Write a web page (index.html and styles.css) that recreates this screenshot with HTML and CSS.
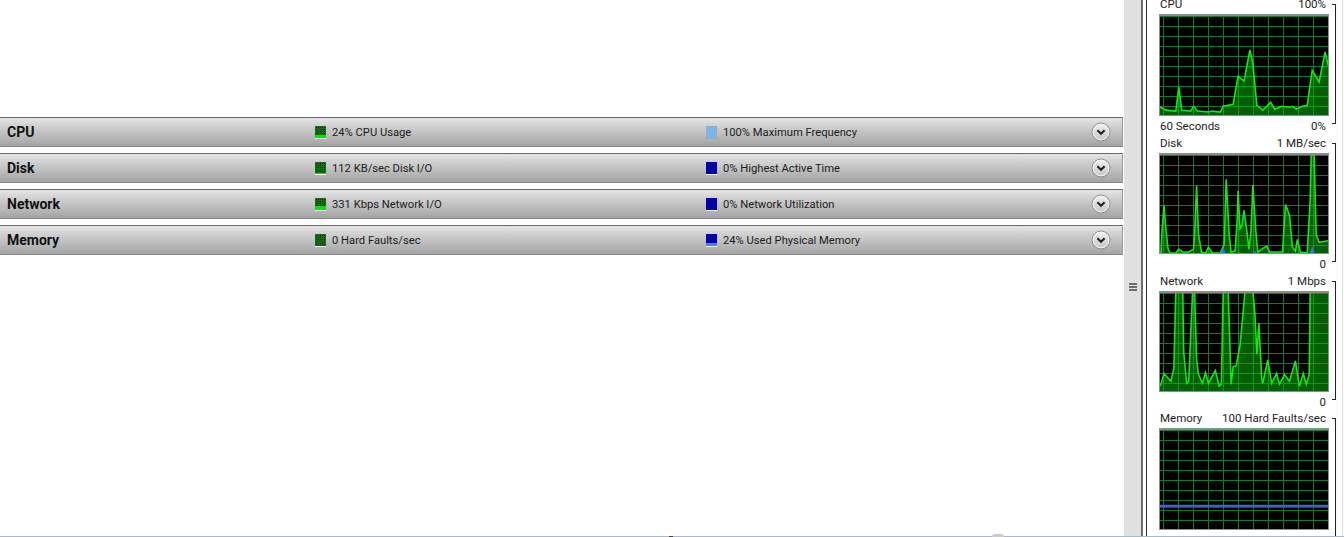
FILE: index.html
```html
<!DOCTYPE html>
<html lang="en">
<head>
  <meta charset="UTF-8" />
  <title>Resource Monitor - Overview</title>
  <link rel="stylesheet" href="styles.css">
</head>
<body>
  <div class="window">
    <!-- Resource bars -->
    <main class="overview">
      <div class="bar">
        <span class="bar-title">CPU</span>
        <span class="stat"><i class="swatch green"><b style="height:24%"></b></i>24% CPU Usage</span>
        <span class="stat"><i class="swatch sky"></i>100% Maximum Frequency</span>
        <svg class="chevron" viewBox="0 0 20 20"><use href="#expand" /></svg>
      </div>
      <div class="bar">
        <span class="bar-title">Disk</span>
        <span class="stat"><i class="swatch green"><b style="height:8%"></b></i>112 KB/sec Disk I/O</span>
        <span class="stat"><i class="swatch blue"></i>0% Highest Active Time</span>
        <svg class="chevron" viewBox="0 0 20 20"><use href="#expand" /></svg>
      </div>
      <div class="bar">
        <span class="bar-title">Network</span>
        <span class="stat"><i class="swatch green"><b style="height:33%"></b></i>331 Kbps Network I/O</span>
        <span class="stat"><i class="swatch blue"></i>0% Network Utilization</span>
        <svg class="chevron" viewBox="0 0 20 20"><use href="#expand" /></svg>
      </div>
      <div class="bar">
        <span class="bar-title">Memory</span>
        <span class="stat"><i class="swatch green"></i>0 Hard Faults/sec</span>
        <span class="stat"><i class="swatch blue"><b style="height:24%"></b></i>24% Used Physical Memory</span>
        <svg class="chevron" viewBox="0 0 20 20"><use href="#expand" /></svg>
      </div>
    </main>

    <div class="splitter"><span class="grip"></span></div>

    <!-- Graphs -->
    <aside class="graphs">
      <section class="graph-group">
        <div class="graph-label head"><span>CPU</span><span>100%</span></div>
        <svg class="graph" viewBox="0 0 170 102" preserveAspectRatio="none">
          <polygon class="load" points="-2,110 -2,94 1,94 6,97 16,98 19,73 22,97 31,98 34,93 38,98 49,99 53,98 61,99 64,93 69,92 74,91 79,62 85,67 91,35 94,49 98,92 104,97 112,89 116,96 123,93 131,94 134,93 138,96 144,93 149,92 154,56 161,68 167,37 172,58 172,110" />
        </svg>
        <div class="graph-label foot"><span>60 Seconds</span><span>0%</span></div>
      </section>

      <section class="graph-group">
        <div class="graph-label head"><span>Disk</span><span>1 MB/sec</span></div>
        <svg class="graph short" viewBox="0 0 170 101" preserveAspectRatio="none">
          <polygon class="load" points="-2,110 -2,101 1,101 2,79 4,52 6,76 8,96 10,101 16,101 19,97 23,100 29,100 34,97 35,82 37,32 39,82 42,100 46,101 49,95 53,101 61,101 65,92 67,25 70,82 72,100 76,99 78,69 79,37 81,76 83,72 85,57 88,79 90,97 92,79 94,31 97,79 99,100 103,97 108,94 111,100 124,100 127,51 131,62 134,95 137,99 139,87 142,100 149,101 152,46 153,0 156,0 158,82 161,90 172,88 172,110" />
          <polygon class="active" points="61,102 64,95 67,102" />
          <polygon class="active" points="93,102 96,99 99,102" />
          <polygon class="active" points="151,102 154,94 157,102" />
        </svg>
        <div class="graph-label foot"><span></span><span>0</span></div>
      </section>

      <section class="graph-group">
        <div class="graph-label head"><span>Network</span><span>1 Mbps</span></div>
        <svg class="graph short" viewBox="0 0 170 101" preserveAspectRatio="none">
          <polygon class="load" points="-2,110 -2,98 1,94 4,83 11,91 14,78 16,-2 23,-2 24,61 27,93 29,91 33,-2 35,-2 37,68 39,84 43,93 46,82 49,93 56,80 60,96 62,94 64,-2 69,-2 72,94 74,76 77,75 81,54 86,-2 94,-2 96,21 98,63 100,31 103,88 104,93 109,69 113,93 118,83 121,94 126,84 131,91 137,70 141,96 145,83 148,94 151,84 152,-2 172,-2 172,110" />
        </svg>
        <div class="graph-label foot"><span></span><span>0</span></div>
      </section>

      <section class="graph-group last">
        <div class="graph-label head"><span>Memory</span><span>100 Hard Faults/sec</span></div>
        <svg class="graph" viewBox="0 0 170 102" preserveAspectRatio="none">
          <rect class="faults" x="0" y="77" width="170" height="3" />
        </svg>
        <div class="graph-label foot"><span></span><span>0</span></div>
      </section>
    </aside>
  </div>

  <div class="edge"><span class="edge-dark"></span><span class="edge-blob"></span></div>

  <svg class="defs" aria-hidden="true">
    <defs>
      <linearGradient id="knob" x1="0" y1="0" x2="0" y2="1">
        <stop offset="0" stop-color="#f2f2f2" />
        <stop offset="1" stop-color="#c4c4c4" />
      </linearGradient>
    </defs>
    <symbol id="expand" viewBox="0 0 20 20">
      <circle cx="10" cy="10" r="9" fill="url(#knob)" stroke="#8e8e8e" />
      <circle cx="10" cy="10" r="7.8" fill="none" stroke="#f4f4f4" />
      <path d="M6.4 8.2 L10 11.8 L13.6 8.2" fill="none" stroke="#222" stroke-width="2.1" />
    </symbol>
  </svg>
</body>
</html>
```

FILE: styles.css
```css
html, body {
  margin: 0;
  padding: 0;
  height: 537px;
  overflow: hidden;
  background: #fff;
  font-family: Roboto, "Liberation Sans", sans-serif;
  font-size: 11.2px;
  color: #1c1c1c;
}
.window {
  display: flex;
  height: 536px;
  overflow: hidden;
}

/* left pane */
.overview {
  width: 1123px;
  flex: none;
  padding-top: 117px;
  box-sizing: border-box;
  display: flex;
  flex-direction: column;
  gap: 6px;
}
.bar {
  display: grid;
  grid-template-columns: 308px 391px 1fr 20px;
  align-items: center;
  height: 30px;
  box-sizing: border-box;
  padding: 0 11px 0 7px;
  background: linear-gradient(#e6e6e6, #d6d6d6 20%, #a4a4a4);
  border-top: 1px solid #666;
  border-bottom: 1px solid #858585;
  border-right: 1px solid #999;
}
.bar-title {
  font-size: 14px;
  font-weight: bold;
  color: #111;
}
.stat {
  display: flex;
  align-items: center;
  gap: 6px;
}
.swatch {
  position: relative;
  display: block;
  width: 11px;
  height: 13px;
  border-bottom: 1px solid #f2f2f2;
  box-sizing: border-box;
}
.swatch b {
  position: absolute;
  left: 0;
  right: 0;
  bottom: 0;
}
.swatch.green {
  background-color: #0a3d0a;
  background-image:
    linear-gradient(90deg, #1d6a1d 1px, transparent 1px),
    linear-gradient(#1d6a1d 1px, transparent 1px);
  background-size: 2px 2px;
}
.swatch.green b { background: #12d812; }
.swatch.blue { background: #0000a8; }
.swatch.blue b { background: #5a78e0; }
.swatch.sky { background: #78b6f2; border: 1px solid #a0a8b0; }
.chevron {
  width: 20px;
  height: 20px;
}

/* splitter */
.splitter {
  width: 17px;
  flex: none;
  margin-left: 1px;
  background: #e0e0e0;
  border-right: 2px solid #6e6e6e;
  display: flex;
  align-items: center;
  justify-content: center;
  padding-top: 38px;
  box-sizing: content-box;
}
.grip {
  width: 8px;
  height: 8px;
  background: repeating-linear-gradient(#6e6e6e 0 2px, #e0e0e0 2px 3px);
}

/* graph column */
.graphs {
  flex: 1;
  margin: -4px 1px 0 3px;
  padding-left: 12px;
  border-left: 1px solid #333;
  border-right: 1px solid #ddd;
  display: flex;
  flex-direction: column;
  gap: 1px;
  font-size: 11.5px;
}
.graph-group {
  position: relative;
  width: 170px;
}
.graph-group::after {
  content: "";
  position: absolute;
  top: 8px;
  bottom: 10px;
  left: 173px;
  width: 3px;
  border: 1px solid #222;
  border-left: none;
}
.graph-group.last { margin-top: -1px; }
.graph-label {
  display: flex;
  justify-content: space-between;
  height: 16px;
  line-height: 16px;
  padding: 0 3px 0 1px;
}
.graph-label.head { padding-bottom: 2px; }
.graph-label.foot { padding-top: 2px; }
.graph {
  display: block;
  width: 170px;
  height: 102px;
  box-sizing: border-box;
  border: 1px solid #8c8c8c;
  border-top-width: 2px;
  background-color: #000;
  background-image:
    linear-gradient(90deg, #0b7f2e 1px, transparent 1px),
    linear-gradient(#0b7f2e 1px, transparent 1px);
  background-size: 15px 10px;
  background-position: 3px 0;
}
.graph.short { height: 101px; }
.load {
  fill: rgba(0, 190, 0, 0.5);
  stroke: #14e814;
  stroke-width: 1.6;
}
.active { fill: #3a6ee0; }
.faults { fill: #3d5fd6; }

/* bottom edge of the window */
.edge {
  position: relative;
  height: 1px;
  background: #a9b8cc;
}
.edge-dark {
  position: absolute;
  left: 669px;
  width: 4px;
  height: 1px;
  background: #444;
}
.edge-blob {
  position: absolute;
  left: 992px;
  top: -2px;
  width: 12px;
  height: 3px;
  border-radius: 6px 6px 0 0;
  background: #ccc;
}
.defs {
  position: absolute;
  width: 0;
  height: 0;
}
```
